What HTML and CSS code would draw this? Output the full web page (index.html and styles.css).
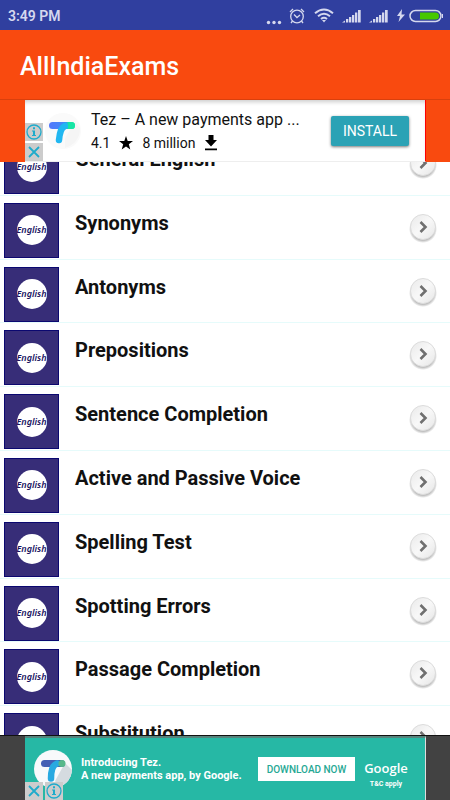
FILE: index.html
```html
<!DOCTYPE html>
<html lang="en">
<head>
<meta charset="utf-8">
<meta name="viewport" content="width=device-width, initial-scale=1">
<title>AllIndiaExams</title>
<link rel="stylesheet" href="styles.css">
</head>
<body>
<svg class="defs" aria-hidden="true">
  <defs>
    <linearGradient id="disc" x1="0" y1="0" x2="1" y2="1"><stop offset="0" stop-color="#e9e9e9"/><stop offset=".5" stop-color="#f8f8f8"/><stop offset="1" stop-color="#e6e6e6"/></linearGradient>
    <linearGradient id="bar" x1="0" x2="1"><stop offset="0" stop-color="#5478fb"/><stop offset=".65" stop-color="#3f8df8"/><stop offset=".75" stop-color="#17e5a5"/></linearGradient>
    <radialGradient id="shade"><stop offset=".8" stop-color="#bbb"/><stop offset="1" stop-color="#bbb" stop-opacity="0"/></radialGradient>
    <symbol id="arrow" viewBox="0 0 30 32">
      <circle cx="15" cy="17" r="14" fill="url(#shade)"/>
      <circle cx="15" cy="15" r="12.5" fill="url(#disc)" stroke="#dcdcdc"/>
      <path d="M12.500 10l5 5-5 5" fill="none" stroke="#707070" stroke-width="2.6"/>
    </symbol>
    <symbol id="info" viewBox="0 0 18 18">
      <circle cx="9" cy="9" r="7" fill="none" stroke="#1fabcb" stroke-width="1.3"/>
      <path d="M8 4.2h2v2H8zM7 7.5h3V12h1v1H7v-1h1V8.5H7z" fill="#1fabcb"/>
    </symbol>
    <symbol id="close" viewBox="0 0 18 18"><path d="M4 4l10 10M14 4L4 14" stroke="#1fabcb" stroke-width="1.8"/></symbol>
    <symbol id="signal" viewBox="0 0 20 14"><path d="M0 13.500l3-2v2zM4 13.500V10h2.300v3.500zM7 13.500V8h2.300v5.500zM10 13.500V6h2.300v7.500zM13 13.500V3.500h2.300v10zM16 13.500V1h2.700v12.500z" fill="#d5d8ee"/></symbol>
  </defs>
</svg>
<div class="status">
  <span>3:49 PM</span>
  <div class="status-icons">
    <svg width="16" height="14" viewBox="0 0 16 14" fill="#d5d8ee"><circle cx="2.5" cy="11.500" r="1.700"/><circle cx="8" cy="11.500" r="1.700"/><circle cx="13.500" cy="11.500" r="1.700"/></svg>
    <svg class="alarm" width="16" height="16" viewBox="0 0 16 16" fill="none" stroke="#d5d8ee" stroke-width="1.300"><circle cx="8" cy="8.500" r="6.300"/><path d="M5 6.500l3 3 3-2.500M1 4l3-3M15 4l-3-3M3.500 13l-1.500 2M12.500 13l1.500 2"/></svg>
    <svg class="wifi" width="20" height="15" viewBox="0 0 20 15" fill="none" stroke="#d5d8ee" stroke-width="2"><path d="M1 5.200q9-7.500 18 0M4 8.300q6-5 12 0M7 11q3-2.400 6 0"/><path d="M8 12h4l-2 2.500z" fill="#d5d8ee" stroke="none"/></svg>
    <svg class="signal" width="20" height="14"><use href="#signal"/></svg>
    <svg class="signal" width="20" height="14"><use href="#signal"/></svg>
    <svg class="bolt" width="8" height="13" viewBox="0 0 8 13"><path d="M5 0L0 7h3l-1.500 6L8 5.500H4.500z" fill="#d5d8ee"/></svg>
    <svg width="35" height="14" viewBox="0 0 35 14"><rect x="1" y="1.500" width="31" height="11" rx="5.500" fill="none" stroke="#d5d8ee" stroke-width="1.500"/><path d="M11 3.500h15.500a3.500 3.500 0 0 1 0 7H11z" fill="#47c800"/><path d="M33.500 5v4" stroke="#d5d8ee"/></svg>
  </div>
</div>
<header class="appbar"><h1>AllIndiaExams</h1></header>
<aside class="top-ad">
  <div class="top-card">
    <div class="choices stacked">
      <button aria-label="Ad information"><svg width="18" height="18"><use href="#info"/></svg></button>
      <button aria-label="Close ad"><svg width="18" height="18"><use href="#close"/></svg></button>
    </div>
    <svg class="tez" width="40" height="40" viewBox="0 0 40 40"><circle cx="20" cy="20" r="18" fill="#fafafa"/><path d="M22 27l10-16 5 6q0 15-15 20z" fill="#f5f5f5"/><rect x="6" y="11" width="26" height="7" rx="3.500" fill="url(#bar)"/><path d="M22 15q-5 2-6 14" fill="none" stroke="#21b7f1" stroke-width="6.500" stroke-linecap="round"/><circle cx="28.500" cy="14.500" r="3.500" fill="#17e5a5"/></svg>
    <div class="top-copy">
      <p class="top-title">Tez – A new payments app ...</p>
      <p class="top-meta"><span>4.1</span>
        <svg width="14" height="14" viewBox="0 0 14 14"><path d="M7 0l1.700 5H14L9.800 8.200 11.300 13.500 7 10.400 2.700 13.500 4.200 8.200 0 5h5.300z"/></svg>
        <span>8 million</span>
        <svg class="download" width="14" height="16" viewBox="0 0 14 16"><path d="M4.500 0h5v5H13l-6 6.500L1 5h3.500zM1 13.500h12v1.800H1z"/></svg>
      </p>
    </div>
    <button class="install">INSTALL</button>
  </div>
</aside>
<main class="viewport">
  <ul class="topics">
    <li><a href="#"><span class="tile"><i>English</i></span><b>General English</b><svg class="go"><use href="#arrow"/></svg></a></li>
    <li><a href="#"><span class="tile"><i>English</i></span><b>Synonyms</b><svg class="go"><use href="#arrow"/></svg></a></li>
    <li><a href="#"><span class="tile"><i>English</i></span><b>Antonyms</b><svg class="go"><use href="#arrow"/></svg></a></li>
    <li><a href="#"><span class="tile"><i>English</i></span><b>Prepositions</b><svg class="go"><use href="#arrow"/></svg></a></li>
    <li><a href="#"><span class="tile"><i>English</i></span><b>Sentence Completion</b><svg class="go"><use href="#arrow"/></svg></a></li>
    <li><a href="#"><span class="tile"><i>English</i></span><b>Active and Passive Voice</b><svg class="go"><use href="#arrow"/></svg></a></li>
    <li><a href="#"><span class="tile"><i>English</i></span><b>Spelling Test</b><svg class="go"><use href="#arrow"/></svg></a></li>
    <li><a href="#"><span class="tile"><i>English</i></span><b>Spotting Errors</b><svg class="go"><use href="#arrow"/></svg></a></li>
    <li><a href="#"><span class="tile"><i>English</i></span><b>Passage Completion</b><svg class="go"><use href="#arrow"/></svg></a></li>
    <li><a href="#"><span class="tile"><i>English</i></span><b>Substitution</b><svg class="go"><use href="#arrow"/></svg></a></li>
  </ul>
</main>
<aside class="bottom-ad">
  <div class="bottom-card">
    <svg class="tez-round" width="38" height="38" viewBox="0 0 38 38"><circle cx="19" cy="19" r="19" fill="#f8f9fb"/><path d="M21 31l10-18 7 7q-1 13-13 17z" fill="#d5dbe0"/><rect x="7" y="10" width="24" height="7" rx="3.500" fill="#455fb4"/><path d="M23 13.500q-6 2-6 15" fill="none" stroke="#29a9e1" stroke-width="6.500" stroke-linecap="round"/><circle cx="28" cy="13.500" r="3.500" fill="#59b98b"/></svg>
    <p class="bottom-copy">Introducing Tez.<br>A new payments app, by Google.</p>
    <button class="download-now">DOWNLOAD NOW</button>
    <div class="brand"><span class="google">Google</span><small>T&amp;C apply</small></div>
    <div class="choices inline">
      <button aria-label="Close ad"><svg width="18" height="18"><use href="#close"/></svg></button>
      <button aria-label="Ad information"><svg width="18" height="18"><use href="#info"/></svg></button>
    </div>
  </div>
</aside>
</body>
</html>
```
FILE: styles.css
```css
* { box-sizing: border-box; }
body {
  margin: 0;
  height: 100vh;
  display: flex;
  flex-direction: column;
  overflow: hidden;
  background: #fff;
  font-family: Roboto, "Liberation Sans", sans-serif;
  color: #111;
}
p, h1, ul { margin: 0; padding: 0; }
button { border: 0; padding: 0; font: inherit; cursor: pointer; }
svg { display: block; flex: none; }
.defs { position: absolute; width: 0; height: 0; }

.status {
  flex: none;
  height: 30px;
  display: flex;
  align-items: center;
  justify-content: space-between;
  padding: 1px 6px 0 8px;
  background: #303f9f;
  color: #d5d8ee;
  font-size: 14px;
  font-weight: 600;
}
.status-icons { display: flex; align-items: center; }
.status-icons svg:first-child { margin-top: 4px; }
.alarm { margin-left: 7px; }
.wifi { margin-left: 9px; }
.signal { margin-left: 7px; }
.wifi + .signal { margin-left: 8px; }
.bolt { margin: 0 4px 0 8px; }

.appbar {
  flex: none;
  height: 70px;
  display: flex;
  align-items: center;
  padding: 4px 20px 0;
  background: #f94a0f;
  border-bottom: 1px solid #d9400d;
  color: #fff;
}
.appbar h1 { font-size: 25px; line-height: 32px; font-weight: 500; }

.top-ad { flex: none; padding: 0 24px 0 25px; background: #f94a0f; }
.top-card {
  position: relative;
  height: 62px;
  display: flex;
  align-items: center;
  padding: 0 16px 0 18px;
  background: #fff;
  box-shadow: inset 0 4px 4px -2px #ccc;
  border-bottom: 1px solid #eee;
  border-right: 1px solid #f00;
}
.choices { position: absolute; left: 0; bottom: 0; display: flex; gap: 2px; }
.choices button { background: #ccc; }
.stacked { flex-direction: column; }
.tez { margin-right: 8px; }
.top-copy { flex: 1; min-width: 0; }
.top-title { font-size: 16px; line-height: 24px; white-space: nowrap; }
.top-meta { display: flex; align-items: center; gap: 9px; font-size: 14px; line-height: 22px; white-space: nowrap; }
.install {
  flex: none;
  width: 78px;
  height: 30px;
  border-radius: 2px;
  background: #2ba2b5;
  box-shadow: 0 1px 3px #777;
  color: #fff;
  font-size: 14px;
}

.viewport { flex: 1; min-height: 0; display: flex; flex-direction: column; overflow: hidden; }
.topics {
  flex: 1;
  margin: -31px 0 -34px;
  display: grid;
  grid-auto-rows: 1fr;
  list-style: none;
}
.topics li { min-height: 0; border-top: 1px solid #e6fbfb; }
.topics a {
  display: flex;
  align-items: flex-start;
  padding: 7px 12px 0 4px;
  color: #111;
  text-decoration: none;
}
.tile {
  width: 55px;
  height: 55px;
  display: grid;
  place-items: center;
  background: #372d78;
  border: 1px solid #0b0870;
}
.tile i {
  width: 30px;
  height: 30px;
  display: flex;
  justify-content: center;
  border-radius: 50%;
  background: #fff;
  color: #18135f;
  font: italic 600 9px/30px "Noto Sans", sans-serif;
}
.topics b { flex: 1; margin-left: 16px; font-size: 20px; line-height: 24px; padding-top: 8px; }
.go { width: 30px; height: 32px; margin-top: 9px; }

.bottom-ad {
  flex: none;
  padding: 0 24px 0 25px;
  background: #424242;
  border-top: 1px solid #111;
}
.bottom-card {
  position: relative;
  height: 64px;
  display: flex;
  align-items: center;
  padding-left: 9px;
  background: #26b8a5;
  border-top: 2px solid #55847d;
  border-right: 1px solid #ddd;
  color: #fff;
}
.bottom-copy { flex: 1; margin-left: 9px; font-size: 11px; line-height: 13px; font-weight: 700; white-space: nowrap; }
.download-now {
  flex: none;
  width: 97px;
  height: 24px;
  background: #fff;
  color: #26a894;
  font-size: 10px;
  font-weight: 500;
}
.brand { width: 62px; padding: 12px 0 0; margin-right: 8px; text-align: center; }
.google { display: block; font: 600 13px/18px "Open Sans", sans-serif; }
.brand small { display: block; font-size: 7px; line-height: 14px; font-weight: 700; }
```
